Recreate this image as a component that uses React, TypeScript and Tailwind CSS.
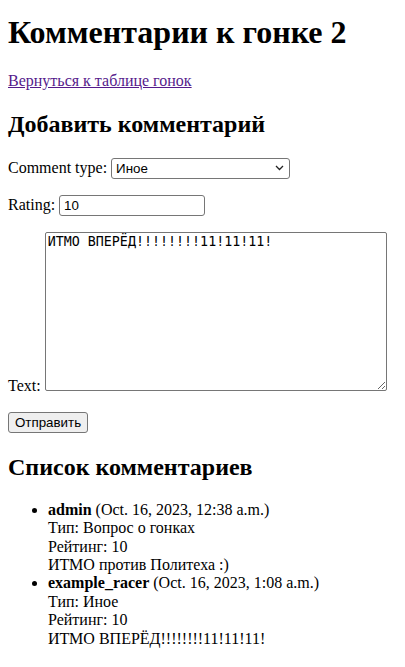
const serif = { fontFamily: '"Liberation Serif", "Times New Roman", serif' };

type Comment = {
  author: string;
  date: string;
  kind: string;
  rating: number;
  text: string;
};

const comments: Comment[] = [
  {
    author: "admin",
    date: "Oct. 16, 2023, 12:38 a.m.",
    kind: "Вопрос о гонках",
    rating: 10,
    text: "ИТМО против Политеха :)",
  },
  {
    author: "example_racer",
    date: "Oct. 16, 2023, 1:08 a.m.",
    kind: "Иное",
    rating: 10,
    text: "ИТМО ВПЕРЁД!!!!!!!!11!11!11!",
  },
];

export default function App() {
  return (
    <div
      className="min-h-[667px] bg-white px-2 pt-[1px] text-[16px] leading-[18.4px] text-black"
      style={serif}
    >
      <h1 className="mt-[13px] mb-[21px] text-[32px] leading-[37px] font-bold">
        Комментарии к гонке 2
      </h1>
      <p className="my-4">
        <a href="#" className="text-[#551a8b] underline">
          Вернуться к таблице гонок
        </a>
      </p>
      <h2 className="mt-[20px] mb-[20px] text-[24px] leading-[28px] font-bold">
        Добавить комментарий
      </h2>
      <form onSubmit={(e) => e.preventDefault()}>
        <p className="my-4">
          <label>Comment type:</label>{" "}
          <span className="relative inline-block align-baseline">
            <select
              defaultValue="other"
              className="h-[21px] w-[179px] appearance-none rounded-[3px] border border-[#767676] bg-white pl-[4px] text-[13.33px] leading-[19px] text-black"
              style={{ fontFamily: '"Liberation Sans", Arial, sans-serif' }}
            >
              <option value="race">Вопрос о гонках</option>
              <option value="other">Иное</option>
            </select>
            <svg
              className="pointer-events-none absolute top-[7px] right-[6px]"
              width="9"
              height="6"
              viewBox="0 0 9 6"
              fill="none"
            >
              <path d="M1 1l3.5 3.5L8 1" stroke="#222" strokeWidth="1.3" />
            </svg>
          </span>
        </p>
        <p className="my-4">
          <label>Rating:</label>{" "}
          <input
            defaultValue="10"
            className="h-[21px] w-[146px] rounded-[3px] border border-[#767676] bg-white px-[4px] text-[13.33px] text-black"
            style={{ fontFamily: '"Liberation Sans", Arial, sans-serif' }}
          />
        </p>
        <p className="my-4">
          <label>Text:</label>{" "}
          <textarea
            defaultValue="ИТМО ВПЕРЁД!!!!!!!!11!11!11!"
            className="h-[159px] w-[342px] resize rounded-[2px] border border-[#767676] bg-white px-[2px] py-[1px] align-baseline text-[13.33px] leading-[15px] text-black"
            style={{ fontFamily: '"DejaVu Sans Mono", Menlo, monospace' }}
          />
        </p>
        <button
          type="submit"
          className="h-[21px] rounded-[3px] border border-[#767676] bg-[#efefef] px-[6px] text-[13.33px] leading-[19px] text-black"
          style={{ fontFamily: '"Liberation Sans", Arial, sans-serif' }}
        >
          Отправить
        </button>
      </form>
      <h2 className="mt-[20px] mb-[20px] text-[24px] leading-[28px] font-bold">
        Список комментариев
      </h2>
      <ul className="list-disc pl-10">
        {comments.map((c) => (
          <li key={c.author}>
            <b>{c.author}</b> ({c.date})
            <br />
            Тип: {c.kind}
            <br />
            Рейтинг: {c.rating}
            <br />
            {c.text}
          </li>
        ))}
      </ul>
    </div>
  );
}
